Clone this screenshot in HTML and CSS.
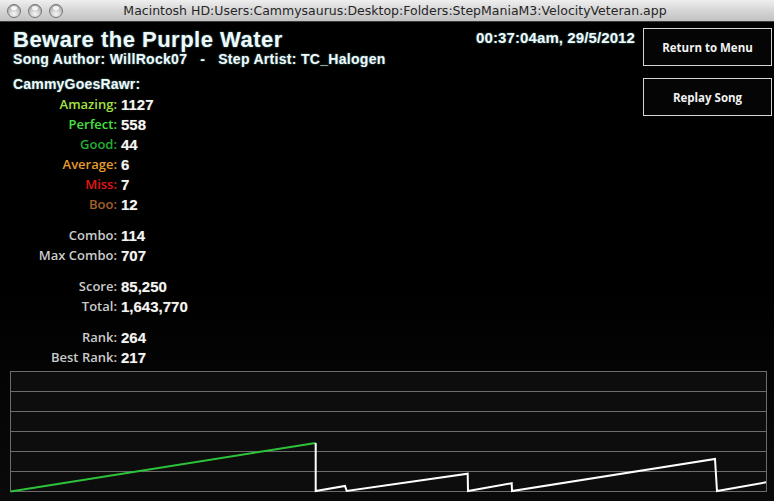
FILE: index.html
```html
<!DOCTYPE html>
<html lang="en">
<head>
<meta charset="utf-8">
<title>VelocityVeteran</title>
<link rel="stylesheet" href="styles.css">
</head>
<body>
<div class="window">
  <header class="titlebar">
    <div class="lights">
      <span class="light"></span>
      <span class="light"></span>
      <span class="light"></span>
    </div>
    <div class="wintitle">Macintosh HD:Users:Cammysaurus:Desktop:Folders:StepManiaM3:VelocityVeteran.app</div>
    <div></div>
  </header>

  <main class="content">
    <div class="top">
      <section class="info">
        <h1 class="song">Beware the Purple Water</h1>
        <p class="credits">Song Author: WillRock07<span class="sep">-</span>Step Artist: TC_Halogen</p>
        <p class="player">CammyGoesRawr:</p>

        <div class="stats">
          <dl class="group">
            <dt class="amazing">Amazing:</dt><dd>1127</dd>
            <dt class="perfect">Perfect:</dt><dd>558</dd>
            <dt class="good">Good:</dt><dd>44</dd>
            <dt class="average">Average:</dt><dd>6</dd>
            <dt class="miss">Miss:</dt><dd>7</dd>
            <dt class="boo">Boo:</dt><dd>12</dd>
          </dl>
          <dl class="group">
            <dt>Combo:</dt><dd>114</dd>
            <dt>Max Combo:</dt><dd>707</dd>
          </dl>
          <dl class="group">
            <dt>Score:</dt><dd>85,250</dd>
            <dt>Total:</dt><dd>1,643,770</dd>
          </dl>
          <dl class="group">
            <dt>Rank:</dt><dd>264</dd>
            <dt>Best Rank:</dt><dd>217</dd>
          </dl>
        </div>
      </section>

      <aside class="side">
        <div class="stamp">00:37:04am, 29/5/2012</div>
        <div class="actions">
          <button class="btn" type="button">Return to Menu</button>
          <button class="btn" type="button">Replay Song</button>
        </div>
      </aside>
    </div>

    <figure class="graph">
      <svg width="757" height="122" viewBox="0 0 757 122">
        <rect x="0" y="0" width="757" height="121" fill="#0d0d0d"/>
        <g stroke="#6c6c6c" stroke-width="1" fill="none">
          <line x1="0" y1="0.5" x2="757" y2="0.5"/>
          <line x1="0" y1="20.5" x2="757" y2="20.5"/>
          <line x1="0" y1="40.5" x2="757" y2="40.5"/>
          <line x1="0" y1="60.5" x2="757" y2="60.5"/>
          <line x1="0" y1="80.5" x2="757" y2="80.5"/>
          <line x1="0" y1="100.5" x2="757" y2="100.5"/>
          <line x1="0" y1="120.5" x2="757" y2="120.5"/>
          <line x1="0.5" y1="0" x2="0.5" y2="121"/>
          <line x1="756.5" y1="0" x2="756.5" y2="121"/>
        </g>
        <!-- combo over time: green while unbroken, white after the first break -->
        <polyline class="run-full" points="0.5,120.5 305.7,72" />
        <polyline class="run-broken" points="305.7,72 305.7,120 335,115 336.7,120 457.7,102.7 458,120 501.7,112.3 502,120 705,88 707,120 756,111.3" />
      </svg>
    </figure>
  </main>
</div>
</body>
</html>
```

FILE: styles.css
```css
html, body {
  margin: 0;
  padding: 0;
  background: #000;
}

.window {
  width: 774px;
  height: 501px;
  display: flex;
  flex-direction: column;
  overflow: hidden;
}

/* ---------- title bar ---------- */
.titlebar {
  height: 21px;
  border-bottom: 1px solid #3c3c3c;
  background: linear-gradient(#efefef, #d6d6d6 50%, #c2c2c2);
  display: grid;
  grid-template-columns: 1fr auto 1fr;
  align-items: center;
}

.lights {
  display: flex;
  gap: 7px;
  padding-left: 7px;
}

.light {
  position: relative;
  width: 14px;
  height: 14px;
  box-sizing: border-box;
  border-radius: 50%;
  border: 1px solid #737373;
  background: radial-gradient(circle at 50% 75%, #f6f6f6 0%, #cdcdcd 45%, #929292 100%);
}

.light::after {
  content: "";
  position: absolute;
  left: 3px;
  top: 1px;
  width: 6px;
  height: 4px;
  border-radius: 50%;
  background: rgba(255, 255, 255, 0.85);
}

.wintitle {
  font: 12.5px "DejaVu Sans", sans-serif;
  color: #262626;
  white-space: nowrap;
  padding-left: 16px;
}

/* ---------- main area ---------- */
.content {
  flex: 1;
  background: linear-gradient(#000 0%, #000 55%, #0a0a0a 100%);
  padding: 6px 2px 0 13px;
  display: flex;
  flex-direction: column;
}

.top {
  display: flex;
  justify-content: space-between;
}

.song,
.credits,
.player,
.stamp {
  margin: 0;
  font-family: "Liberation Sans", Arial, sans-serif;
  font-weight: 700;
  color: #eefafa;
  text-shadow: 0 0 2px rgba(130, 215, 225, 0.6);
}

.song {
  font-size: 22px;
  line-height: 23px;
  letter-spacing: 0.5px;
}

.credits {
  font-size: 14px;
  line-height: 16px;
  letter-spacing: 0.3px;
}

.sep {
  margin: 0 13px;
}

.player {
  margin-top: 9px;
  font-size: 14px;
  line-height: 16px;
  letter-spacing: 0.2px;
}

/* ---------- judgement table ---------- */
.stats {
  margin-top: 2px;
  display: flex;
  flex-direction: column;
  gap: 11px;
}

.group {
  margin: 0;
  display: grid;
  grid-template-columns: 104px auto;
  column-gap: 4px;
  grid-auto-rows: 20px;
  align-items: center;
}

.group dt {
  text-align: right;
  font: 600 13px "Open Sans", sans-serif;
  color: #cacaca;
}

.group dd {
  margin: 0;
  font: 700 15px "Liberation Sans", Arial, sans-serif;
  color: #f4f4f0;
  text-shadow: 0 0 1px rgba(255, 255, 255, 0.4);
}

.group .amazing { color: #a2e244; }
.group .perfect { color: #46e040; }
.group .good    { color: #26ad33; }
.group .average { color: #e79b2a; }
.group .miss    { color: #e41616; }
.group .boo     { color: #a2602a; }

/* ---------- right column ---------- */
.side {
  display: flex;
  align-items: flex-start;
  gap: 8px;
}

.stamp {
  margin-top: 2px;
  font-size: 15px;
  line-height: 16px;
  letter-spacing: 0.1px;
}

.actions {
  display: flex;
  flex-direction: column;
  gap: 12px;
}

.btn {
  width: 129px;
  height: 38px;
  box-sizing: border-box;
  border: 1px solid #d6d6d6;
  border-radius: 0;
  background: #050505;
  color: #f2f2f2;
  font: 700 11.5px "Open Sans", sans-serif;
  padding: 0;
}

/* ---------- combo graph ---------- */
.graph {
  margin: 4px 0 0 -3px;
  height: 122px;
}

.graph svg {
  display: block;
  overflow: visible;
}

.run-full {
  fill: none;
  stroke: #2cc23a;
  stroke-width: 2;
}

.run-broken {
  fill: none;
  stroke: #ffffff;
  stroke-width: 2;
}
```
